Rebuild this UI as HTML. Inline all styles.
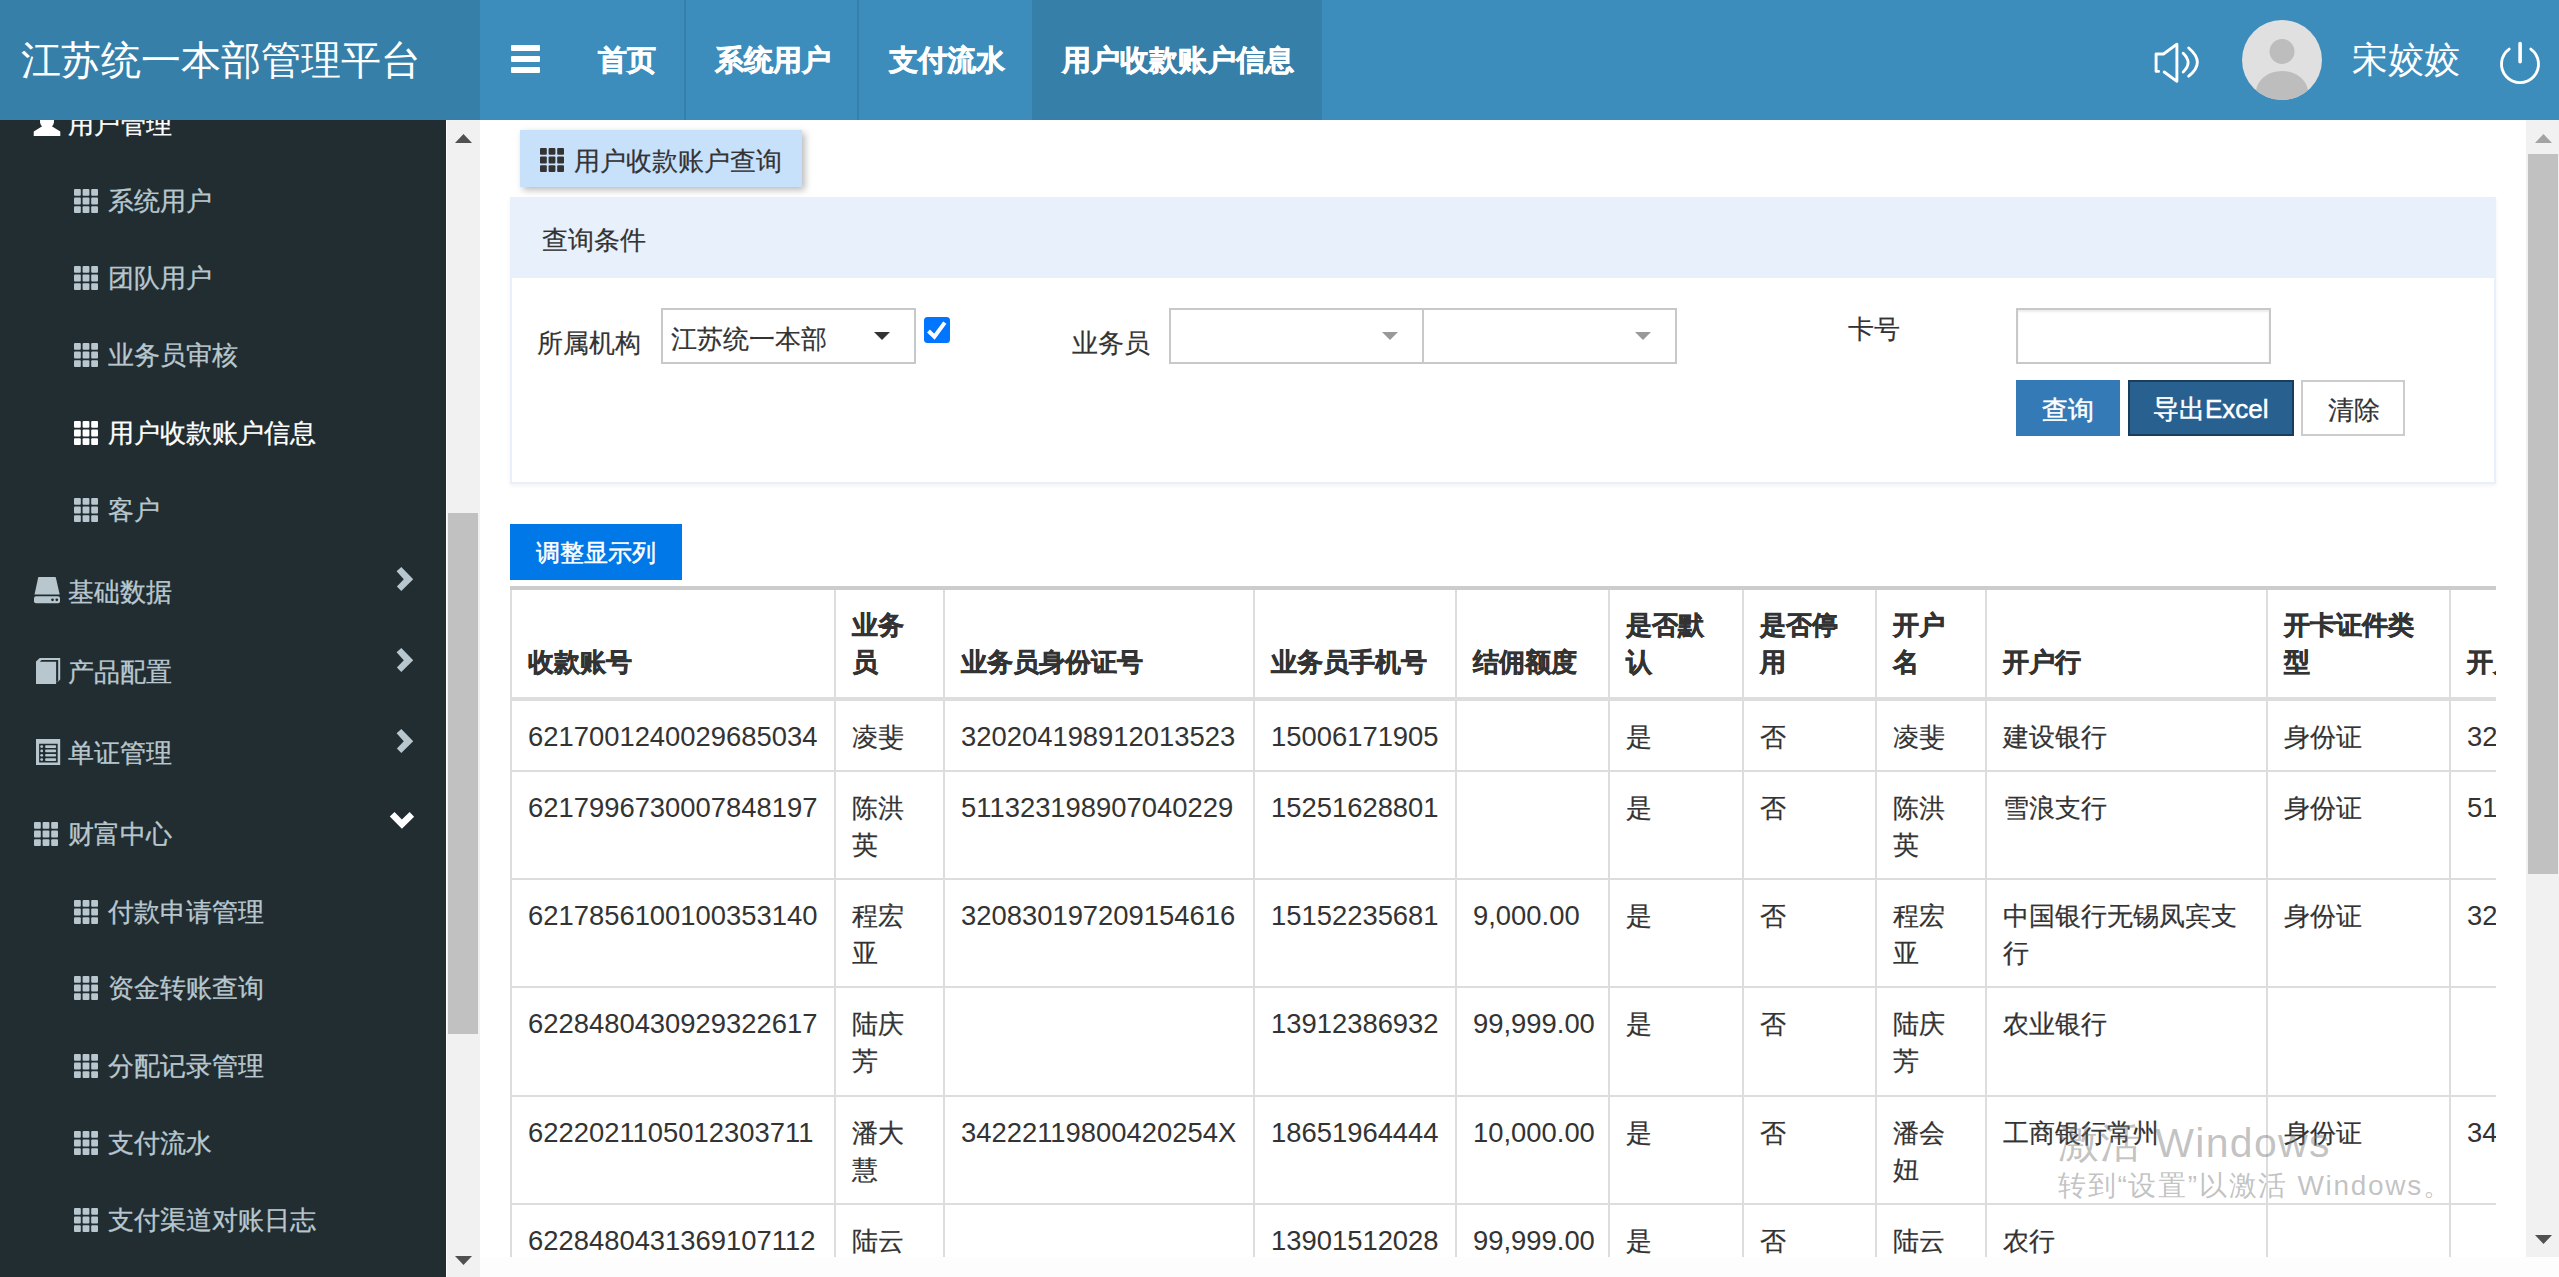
<!DOCTYPE html>
<html><head><meta charset="utf-8">
<style>
*{box-sizing:border-box}
html,body{margin:0;padding:0}
body{width:2559px;height:1277px;overflow:hidden;position:relative;background:#fcfdfc;font-family:"Liberation Sans",sans-serif;color:#333}
.abs{position:absolute;white-space:nowrap}
#hdr{position:absolute;left:0;top:0;width:2559px;height:120px;background:#3c8dbc}
#logo{position:absolute;left:0;top:0;width:480px;height:120px;background:#367fa9}
.nav{position:absolute;top:0;height:120px;color:#fff;font-weight:bold;font-size:28.5px;line-height:28.5px;-webkit-text-stroke:0.6px #fff}
.sep{position:absolute;top:0;width:2px;height:120px;background:#367fa9}
#side{position:absolute;left:0;top:120px;width:446px;height:1157px;background:#222d32;overflow:hidden}
.si{position:absolute;font-size:26px;line-height:26px;color:#b8c7ce;white-space:nowrap;-webkit-text-stroke:0.3px currentColor}
.grid{position:absolute;width:24px;height:24px}
#sbar{position:absolute;left:446px;top:120px;width:34px;height:1157px;background:#f1f1f1;border-left:1px solid #fff}
#content{position:absolute;left:480px;top:120px;width:2046px;height:1137px;background:#fff;overflow:hidden}
#rbar{position:absolute;left:2526px;top:120px;width:33px;height:1137px;background:#f1f1f1}
.t26{font-size:26px;line-height:26px;-webkit-text-stroke:0.2px currentColor}

#tb{border-collapse:collapse;table-layout:fixed;width:2263px;font-size:26px;line-height:37.14px;color:#333}
#tb th,#tb td{-webkit-text-stroke:0.2px #333;border:2px solid #ddd;padding:16px;text-align:left;vertical-align:bottom;word-break:break-all}
#tb td{vertical-align:top;padding:18px 16px 10px}
#tb thead th{border-bottom:4px solid #ddd;font-weight:bold;-webkit-text-stroke:0.5px #333}
#tb thead tr th{border-top:4px solid #ccc}
#tb .n{font-size:27.4px;position:relative;top:-1px;white-space:nowrap;-webkit-text-stroke:0}
#tb tr.r0{height:111px}#tb tr.r1{height:72px}#tb tr.r2{height:108px}#tb tr.r3,#tb tr.r5,#tb tr.r6{height:108px}#tb tr.r4{height:109px}
</style></head><body>


<div id="side">
</div>
<div id="sbar"></div>
<div id="content"></div>
<div id="rbar"></div>
<svg class="abs" style="left:74px;top:189px" width="24" height="24" viewBox="0 0 24 24" fill="#b8c7ce"><rect x="0.0" y="0.0" width="6.8" height="6.8" rx="1"/><rect x="0.0" y="8.6" width="6.8" height="6.8" rx="1"/><rect x="0.0" y="17.2" width="6.8" height="6.8" rx="1"/><rect x="8.6" y="0.0" width="6.8" height="6.8" rx="1"/><rect x="8.6" y="8.6" width="6.8" height="6.8" rx="1"/><rect x="8.6" y="17.2" width="6.8" height="6.8" rx="1"/><rect x="17.2" y="0.0" width="6.8" height="6.8" rx="1"/><rect x="17.2" y="8.6" width="6.8" height="6.8" rx="1"/><rect x="17.2" y="17.2" width="6.8" height="6.8" rx="1"/></svg>
<div class="si" style="left:108px;top:188px;color:#b8c7ce">系统用户</div>
<svg class="abs" style="left:74px;top:266px" width="24" height="24" viewBox="0 0 24 24" fill="#b8c7ce"><rect x="0.0" y="0.0" width="6.8" height="6.8" rx="1"/><rect x="0.0" y="8.6" width="6.8" height="6.8" rx="1"/><rect x="0.0" y="17.2" width="6.8" height="6.8" rx="1"/><rect x="8.6" y="0.0" width="6.8" height="6.8" rx="1"/><rect x="8.6" y="8.6" width="6.8" height="6.8" rx="1"/><rect x="8.6" y="17.2" width="6.8" height="6.8" rx="1"/><rect x="17.2" y="0.0" width="6.8" height="6.8" rx="1"/><rect x="17.2" y="8.6" width="6.8" height="6.8" rx="1"/><rect x="17.2" y="17.2" width="6.8" height="6.8" rx="1"/></svg>
<div class="si" style="left:108px;top:265px;color:#b8c7ce">团队用户</div>
<svg class="abs" style="left:74px;top:343px" width="24" height="24" viewBox="0 0 24 24" fill="#b8c7ce"><rect x="0.0" y="0.0" width="6.8" height="6.8" rx="1"/><rect x="0.0" y="8.6" width="6.8" height="6.8" rx="1"/><rect x="0.0" y="17.2" width="6.8" height="6.8" rx="1"/><rect x="8.6" y="0.0" width="6.8" height="6.8" rx="1"/><rect x="8.6" y="8.6" width="6.8" height="6.8" rx="1"/><rect x="8.6" y="17.2" width="6.8" height="6.8" rx="1"/><rect x="17.2" y="0.0" width="6.8" height="6.8" rx="1"/><rect x="17.2" y="8.6" width="6.8" height="6.8" rx="1"/><rect x="17.2" y="17.2" width="6.8" height="6.8" rx="1"/></svg>
<div class="si" style="left:108px;top:342px;color:#b8c7ce">业务员审核</div>
<svg class="abs" style="left:74px;top:421px" width="24" height="24" viewBox="0 0 24 24" fill="#fff"><rect x="0.0" y="0.0" width="6.8" height="6.8" rx="1"/><rect x="0.0" y="8.6" width="6.8" height="6.8" rx="1"/><rect x="0.0" y="17.2" width="6.8" height="6.8" rx="1"/><rect x="8.6" y="0.0" width="6.8" height="6.8" rx="1"/><rect x="8.6" y="8.6" width="6.8" height="6.8" rx="1"/><rect x="8.6" y="17.2" width="6.8" height="6.8" rx="1"/><rect x="17.2" y="0.0" width="6.8" height="6.8" rx="1"/><rect x="17.2" y="8.6" width="6.8" height="6.8" rx="1"/><rect x="17.2" y="17.2" width="6.8" height="6.8" rx="1"/></svg>
<div class="si" style="left:108px;top:420px;color:#fff">用户收款账户信息</div>
<svg class="abs" style="left:74px;top:498px" width="24" height="24" viewBox="0 0 24 24" fill="#b8c7ce"><rect x="0.0" y="0.0" width="6.8" height="6.8" rx="1"/><rect x="0.0" y="8.6" width="6.8" height="6.8" rx="1"/><rect x="0.0" y="17.2" width="6.8" height="6.8" rx="1"/><rect x="8.6" y="0.0" width="6.8" height="6.8" rx="1"/><rect x="8.6" y="8.6" width="6.8" height="6.8" rx="1"/><rect x="8.6" y="17.2" width="6.8" height="6.8" rx="1"/><rect x="17.2" y="0.0" width="6.8" height="6.8" rx="1"/><rect x="17.2" y="8.6" width="6.8" height="6.8" rx="1"/><rect x="17.2" y="17.2" width="6.8" height="6.8" rx="1"/></svg>
<div class="si" style="left:108px;top:497px;color:#b8c7ce">客户</div>
<svg class="abs" style="left:74px;top:900px" width="24" height="24" viewBox="0 0 24 24" fill="#b8c7ce"><rect x="0.0" y="0.0" width="6.8" height="6.8" rx="1"/><rect x="0.0" y="8.6" width="6.8" height="6.8" rx="1"/><rect x="0.0" y="17.2" width="6.8" height="6.8" rx="1"/><rect x="8.6" y="0.0" width="6.8" height="6.8" rx="1"/><rect x="8.6" y="8.6" width="6.8" height="6.8" rx="1"/><rect x="8.6" y="17.2" width="6.8" height="6.8" rx="1"/><rect x="17.2" y="0.0" width="6.8" height="6.8" rx="1"/><rect x="17.2" y="8.6" width="6.8" height="6.8" rx="1"/><rect x="17.2" y="17.2" width="6.8" height="6.8" rx="1"/></svg>
<div class="si" style="left:108px;top:899px">付款申请管理</div>
<svg class="abs" style="left:74px;top:976px" width="24" height="24" viewBox="0 0 24 24" fill="#b8c7ce"><rect x="0.0" y="0.0" width="6.8" height="6.8" rx="1"/><rect x="0.0" y="8.6" width="6.8" height="6.8" rx="1"/><rect x="0.0" y="17.2" width="6.8" height="6.8" rx="1"/><rect x="8.6" y="0.0" width="6.8" height="6.8" rx="1"/><rect x="8.6" y="8.6" width="6.8" height="6.8" rx="1"/><rect x="8.6" y="17.2" width="6.8" height="6.8" rx="1"/><rect x="17.2" y="0.0" width="6.8" height="6.8" rx="1"/><rect x="17.2" y="8.6" width="6.8" height="6.8" rx="1"/><rect x="17.2" y="17.2" width="6.8" height="6.8" rx="1"/></svg>
<div class="si" style="left:108px;top:975px">资金转账查询</div>
<svg class="abs" style="left:74px;top:1054px" width="24" height="24" viewBox="0 0 24 24" fill="#b8c7ce"><rect x="0.0" y="0.0" width="6.8" height="6.8" rx="1"/><rect x="0.0" y="8.6" width="6.8" height="6.8" rx="1"/><rect x="0.0" y="17.2" width="6.8" height="6.8" rx="1"/><rect x="8.6" y="0.0" width="6.8" height="6.8" rx="1"/><rect x="8.6" y="8.6" width="6.8" height="6.8" rx="1"/><rect x="8.6" y="17.2" width="6.8" height="6.8" rx="1"/><rect x="17.2" y="0.0" width="6.8" height="6.8" rx="1"/><rect x="17.2" y="8.6" width="6.8" height="6.8" rx="1"/><rect x="17.2" y="17.2" width="6.8" height="6.8" rx="1"/></svg>
<div class="si" style="left:108px;top:1053px">分配记录管理</div>
<svg class="abs" style="left:74px;top:1131px" width="24" height="24" viewBox="0 0 24 24" fill="#b8c7ce"><rect x="0.0" y="0.0" width="6.8" height="6.8" rx="1"/><rect x="0.0" y="8.6" width="6.8" height="6.8" rx="1"/><rect x="0.0" y="17.2" width="6.8" height="6.8" rx="1"/><rect x="8.6" y="0.0" width="6.8" height="6.8" rx="1"/><rect x="8.6" y="8.6" width="6.8" height="6.8" rx="1"/><rect x="8.6" y="17.2" width="6.8" height="6.8" rx="1"/><rect x="17.2" y="0.0" width="6.8" height="6.8" rx="1"/><rect x="17.2" y="8.6" width="6.8" height="6.8" rx="1"/><rect x="17.2" y="17.2" width="6.8" height="6.8" rx="1"/></svg>
<div class="si" style="left:108px;top:1130px">支付流水</div>
<svg class="abs" style="left:74px;top:1208px" width="24" height="24" viewBox="0 0 24 24" fill="#b8c7ce"><rect x="0.0" y="0.0" width="6.8" height="6.8" rx="1"/><rect x="0.0" y="8.6" width="6.8" height="6.8" rx="1"/><rect x="0.0" y="17.2" width="6.8" height="6.8" rx="1"/><rect x="8.6" y="0.0" width="6.8" height="6.8" rx="1"/><rect x="8.6" y="8.6" width="6.8" height="6.8" rx="1"/><rect x="8.6" y="17.2" width="6.8" height="6.8" rx="1"/><rect x="17.2" y="0.0" width="6.8" height="6.8" rx="1"/><rect x="17.2" y="8.6" width="6.8" height="6.8" rx="1"/><rect x="17.2" y="17.2" width="6.8" height="6.8" rx="1"/></svg>
<div class="si" style="left:108px;top:1207px">支付渠道对账日志</div>
<svg class="abs" style="left:33px;top:115px" width="28" height="22" viewBox="0 0 28 22"><path d="M7 0 H21 V6 Q21 10 18.8 11.3 L27.3 16.5 V21 H0.75 V16.5 L9.2 11.3 Q7 10 7 6 Z" fill="#fff"/></svg>
<div class="si" style="left:68px;top:111px;color:#fff">用户管理</div>
<svg class="abs" style="left:34px;top:577px" width="26" height="27" viewBox="0 0 26 27"><path d="M4.8 0 H21 Q21.6 0 21.8 0.6 L25.7 17.6 H0.5 L4.2 0.6 Q4.4 0 4.8 0Z" fill="#b8c7ce"/><rect x="0" y="19.3" width="26" height="7" rx="2" fill="#b8c7ce"/><circle cx="18.5" cy="22.8" r="1.4" fill="#222d32"/><circle cx="22.8" cy="22.8" r="1.4" fill="#222d32"/></svg>
<div class="si" style="left:68px;top:579px">基础数据</div>
<svg class="abs" style="left:35.8px;top:658px" width="25" height="26" viewBox="0 0 25 26"><path d="M0 3.4 L3.8 0 H24.2 V21.6 L22.2 23.5 H20.1 V26 H0 Z" fill="#b8c7ce"/><path d="M3.8 3.7 L5.6 1.9 H22.2 V23.6 H20.1 V3.7 Z" fill="#222d32"/></svg>
<div class="si" style="left:68px;top:659px">产品配置</div>
<svg class="abs" style="left:35.8px;top:739px" width="25" height="26" viewBox="0 0 25 26"><path fill-rule="evenodd" d="M0 0 H24.2 V26 H0 Z M3.1 4.7 V23.5 H21.7 V4.7 Z" fill="#b8c7ce"/><circle cx="5.7" cy="7.6" r="1.4" fill="#b8c7ce"/><rect x="9.1" y="6.3" width="11" height="2.6" rx="1" fill="#b8c7ce"/><circle cx="5.7" cy="11.9" r="1.4" fill="#b8c7ce"/><rect x="9.1" y="10.6" width="11" height="2.6" rx="1" fill="#b8c7ce"/><circle cx="5.7" cy="16.3" r="1.4" fill="#b8c7ce"/><rect x="9.1" y="15.0" width="11" height="2.6" rx="1" fill="#b8c7ce"/><circle cx="5.7" cy="20.6" r="1.4" fill="#b8c7ce"/><rect x="9.1" y="19.3" width="11" height="2.6" rx="1" fill="#b8c7ce"/></svg>
<div class="si" style="left:68px;top:740px">单证管理</div>
<svg class="abs" style="left:34px;top:822px" width="24" height="24" viewBox="0 0 24 24" fill="#b8c7ce"><rect x="0.0" y="0.0" width="6.8" height="6.8" rx="1"/><rect x="0.0" y="8.6" width="6.8" height="6.8" rx="1"/><rect x="0.0" y="17.2" width="6.8" height="6.8" rx="1"/><rect x="8.6" y="0.0" width="6.8" height="6.8" rx="1"/><rect x="8.6" y="8.6" width="6.8" height="6.8" rx="1"/><rect x="8.6" y="17.2" width="6.8" height="6.8" rx="1"/><rect x="17.2" y="0.0" width="6.8" height="6.8" rx="1"/><rect x="17.2" y="8.6" width="6.8" height="6.8" rx="1"/><rect x="17.2" y="17.2" width="6.8" height="6.8" rx="1"/></svg>
<div class="si" style="left:68px;top:821px">财富中心</div>
<svg class="abs" style="left:396px;top:566px" width="18" height="26" viewBox="0 0 18 26"><path d="M5.3 0.9 L17.2 13.3 L5.3 25 L0.9 20.6 L7.8 13.3 L0.6 5.3 Z" fill="#b8c7ce"/></svg>
<svg class="abs" style="left:396px;top:647px" width="18" height="26" viewBox="0 0 18 26"><path d="M5.3 0.9 L17.2 13.3 L5.3 25 L0.9 20.6 L7.8 13.3 L0.6 5.3 Z" fill="#b8c7ce"/></svg>
<svg class="abs" style="left:396px;top:728px" width="18" height="26" viewBox="0 0 18 26"><path d="M5.3 0.9 L17.2 13.3 L5.3 25 L0.9 20.6 L7.8 13.3 L0.6 5.3 Z" fill="#b8c7ce"/></svg>
<svg class="abs" style="left:389px;top:811px" width="26" height="19" viewBox="0 0 26 19"><path d="M0.8 5.6 L5.5 1.1 L12.9 8.6 L20.6 1.1 L25.1 5.8 L12.9 17.7 Z" fill="#fff"/></svg>
<div class="abs" style="left:448px;top:513px;width:30px;height:521px;background:#c1c1c1"></div>
<svg class="abs" style="left:455px;top:134px" width="17" height="9" viewBox="0 0 17 9"><path d="M0 9 L8.5 0 L17 9Z" fill="#505050"/></svg>
<svg class="abs" style="left:455px;top:1256px" width="17" height="9" viewBox="0 0 17 9"><path d="M0 0 L8.5 9 L17 0Z" fill="#505050"/></svg>
<div class="abs" style="left:2528px;top:154px;width:30px;height:720px;background:#c1c1c1"></div>
<svg class="abs" style="left:2535px;top:134px" width="17" height="9" viewBox="0 0 17 9"><path d="M0 9 L8.5 0 L17 9Z" fill="#a3a3a3"/></svg>
<svg class="abs" style="left:2535px;top:1235px" width="17" height="9" viewBox="0 0 17 9"><path d="M0 0 L8.5 9 L17 0Z" fill="#505050"/></svg>
<div class="abs" style="left:520px;top:130px;width:282px;height:57px;background:#c8e1fb;box-shadow:3px 3px 7px rgba(0,0,0,0.28)"></div>
<svg class="abs" style="left:540px;top:148px" width="24" height="24" viewBox="0 0 24 24" fill="#333"><rect x="0.0" y="0.0" width="6.8" height="6.8" rx="1"/><rect x="0.0" y="8.6" width="6.8" height="6.8" rx="1"/><rect x="0.0" y="17.2" width="6.8" height="6.8" rx="1"/><rect x="8.6" y="0.0" width="6.8" height="6.8" rx="1"/><rect x="8.6" y="8.6" width="6.8" height="6.8" rx="1"/><rect x="8.6" y="17.2" width="6.8" height="6.8" rx="1"/><rect x="17.2" y="0.0" width="6.8" height="6.8" rx="1"/><rect x="17.2" y="8.6" width="6.8" height="6.8" rx="1"/><rect x="17.2" y="17.2" width="6.8" height="6.8" rx="1"/></svg>
<div class="abs t26" style="left:574px;top:148px;color:#333">用户收款账户查询</div>
<div class="abs" style="left:510px;top:197px;width:1986px;height:287px;border:2px solid #e8f1fb;background:#fff;box-shadow:0 2px 4px rgba(0,0,0,0.05)"></div>
<div class="abs" style="left:510px;top:197px;width:1986px;height:81px;background:#e8f1fb"></div>
<div class="abs t26" style="left:542px;top:227px;color:#333">查询条件</div>
<div class="abs t26" style="left:537px;top:330px;color:#333">所属机构</div>
<div class="abs" style="left:661px;top:308px;width:255px;height:56px;border:2px solid #c8c8c8;background:#fff"></div>
<div class="abs t26" style="left:671px;top:326px;color:#333">江苏统一本部</div>
<svg class="abs" style="left:874px;top:332px" width="16" height="8" viewBox="0 0 16 8"><path d="M0 0H16L8 8Z" fill="#333"/></svg>
<svg class="abs" style="left:924px;top:317px" width="26" height="26" viewBox="0 0 26 26"><rect x="0" y="0" width="26" height="26" rx="3.5" fill="#0075ff"/><path d="M4.5 14 L10.4 19.8 L20.8 5.6" fill="none" stroke="#fff" stroke-width="4"/></svg>
<div class="abs t26" style="left:1072px;top:330px;color:#333">业务员</div>
<div class="abs" style="left:1169px;top:308px;width:508px;height:56px;border:2px solid #c8c8c8;background:#fff"></div>
<div class="abs" style="left:1422px;top:308px;width:2px;height:56px;background:#c8c8c8"></div>
<svg class="abs" style="left:1382px;top:332px" width="16" height="8" viewBox="0 0 16 8"><path d="M0 0H16L8 8Z" fill="#999"/></svg>
<svg class="abs" style="left:1635px;top:332px" width="16" height="8" viewBox="0 0 16 8"><path d="M0 0H16L8 8Z" fill="#999"/></svg>
<div class="abs t26" style="left:1848px;top:316px;color:#333">卡号</div>
<div class="abs" style="left:2016px;top:308px;width:255px;height:56px;border:2px solid #c8c8c8;background:#fff;box-shadow:inset 0 2px 2px rgba(0,0,0,.075)"></div>
<div class="abs" style="left:2016px;top:380px;width:104px;height:56px;background:#337ab7"></div>
<div class="abs t26" style="left:2042px;top:397px;color:#fff;-webkit-text-stroke:0.5px #fff">查询</div>
<div class="abs" style="left:2128px;top:380px;width:166px;height:56px;background:#286090;border:2px solid #1a3d5c"></div>
<div class="abs t26" style="left:2153px;top:396px;color:#fff;-webkit-text-stroke:0.5px #fff">导出Excel</div>
<div class="abs" style="left:2301px;top:380px;width:104px;height:56px;background:#fff;border:2px solid #ccc"></div>
<div class="abs t26" style="left:2328px;top:397px;color:#333">清除</div>
<div class="abs" style="left:510px;top:524px;width:172px;height:56px;background:#0078e7"></div>
<div class="abs" style="left:536px;top:541px;color:#fff;font-size:24px;line-height:24px;-webkit-text-stroke:0.5px #fff">调整显示列</div>
<div id="tw" style="position:absolute;left:510px;top:586px;width:1986px;height:671px;overflow:hidden">
<table id="tb"><colgroup><col style="width:324px"><col style="width:109px"><col style="width:310px"><col style="width:202px"><col style="width:153px"><col style="width:134px"><col style="width:133px"><col style="width:110px"><col style="width:281px"><col style="width:183px"><col style="width:330px"></colgroup>
<thead><tr class="r0"><th>收款账号</th><th>业务员</th><th>业务员身份证号</th><th>业务员手机号</th><th>结佣额度</th><th>是否默认</th><th>是否停用</th><th>开户名</th><th>开户行</th><th>开卡证件类型</th><th>开户人证件号码</th></tr></thead><tbody>
<tr class="r1"><td><span class="n">6217001240029685034</span></td><td>凌斐</td><td><span class="n">320204198912013523</span></td><td><span class="n">15006171905</span></td><td></td><td>是</td><td>否</td><td>凌斐</td><td>建设银行</td><td>身份证</td><td><span class="n">320204198912013523</span></td></tr>
<tr class="r2"><td><span class="n">6217996730007848197</span></td><td>陈洪英</td><td><span class="n">511323198907040229</span></td><td><span class="n">15251628801</span></td><td></td><td>是</td><td>否</td><td>陈洪英</td><td>雪浪支行</td><td>身份证</td><td><span class="n">511323198907040229</span></td></tr>
<tr class="r3"><td><span class="n">6217856100100353140</span></td><td>程宏亚</td><td><span class="n">320830197209154616</span></td><td><span class="n">15152235681</span></td><td><span class="n">9,000.00</span></td><td>是</td><td>否</td><td>程宏亚</td><td>中国银行无锡凤宾支行</td><td>身份证</td><td><span class="n">320830197209154616</span></td></tr>
<tr class="r4"><td><span class="n">6228480430929322617</span></td><td>陆庆芳</td><td></td><td><span class="n">13912386932</span></td><td><span class="n">99,999.00</span></td><td>是</td><td>否</td><td>陆庆芳</td><td>农业银行</td><td></td><td></td></tr>
<tr class="r5"><td><span class="n">6222021105012303711</span></td><td>潘大慧</td><td><span class="n">34222119800420254X</span></td><td><span class="n">18651964444</span></td><td><span class="n">10,000.00</span></td><td>是</td><td>否</td><td>潘会妞</td><td>工商银行常州</td><td>身份证</td><td><span class="n">34222119800420254X</span></td></tr>
<tr class="r6"><td><span class="n">6228480431369107112</span></td><td>陆云云</td><td></td><td><span class="n">13901512028</span></td><td><span class="n">99,999.00</span></td><td>是</td><td>否</td><td>陆云云</td><td>农行</td><td></td><td></td></tr>
</tbody></table></div>
<div class="abs" style="left:2058px;top:1118px;font-size:41px;line-height:50px;letter-spacing:1.3px;color:rgba(120,120,120,0.45)">激活 Windows</div>
<div class="abs" style="left:2058px;top:1169px;font-size:28px;line-height:34px;letter-spacing:1.7px;color:rgba(120,120,120,0.45)">转到“设置”以激活 Windows。</div>


<div id="hdr">
  <div id="logo"></div>
  <div class="abs" style="left:21px;top:40px;font-size:40.1px;line-height:40.1px;color:#fff">江苏统一本部管理平台</div>
  <!-- hamburger -->
  <div class="abs" style="left:511px;top:45px;width:29px;height:6px;background:#fff;border-radius:1px"></div>
  <div class="abs" style="left:511px;top:56px;width:29px;height:6px;background:#fff;border-radius:1px"></div>
  <div class="abs" style="left:511px;top:67px;width:29px;height:6px;background:#fff;border-radius:1px"></div>
  <div class="abs nav" style="left:598px;top:46px">首页</div>
  <div class="sep" style="left:684px"></div>
  <div class="abs nav" style="left:715px;top:46px">系统用户</div>
  <div class="sep" style="left:857px"></div>
  <div class="abs" style="left:1032px;top:0;width:290px;height:120px;background:#367fa9"></div>
  <div class="abs nav" style="left:889px;top:46px">支付流水</div>
  <div class="abs nav" style="left:1062px;top:46px">用户收款账户信息</div>
  <!-- speaker -->
  <svg class="abs" style="left:2145px;top:35px" width="65" height="55" viewBox="0 0 65 55">
    <path d="M13.6 36.4 H11.1 V19 H18.5 L31.9 9.2 V46.3 L19.2 37" fill="none" stroke="#fff" stroke-width="2.9" stroke-linecap="round" stroke-linejoin="round"/>
    <path d="M38.2 18.2 Q48 27.6 38.2 37" fill="none" stroke="#fff" stroke-width="2.9" stroke-linecap="round"/>
    <path d="M43.7 13 Q61 27.6 43.7 41.2" fill="none" stroke="#fff" stroke-width="2.9" stroke-linecap="round"/>
  </svg>
  <!-- avatar -->
  <svg class="abs" style="left:2242px;top:20px" width="80" height="80" viewBox="0 0 80 80">
    <defs><clipPath id="cc"><circle cx="40" cy="40" r="40"/></clipPath></defs>
    <circle cx="40" cy="40" r="40" fill="#e0e0e0"/>
    <g clip-path="url(#cc)">
      <circle cx="40" cy="31.5" r="12.5" fill="#bdbdbd"/>
      <ellipse cx="40" cy="72" rx="26" ry="21" fill="#bdbdbd"/>
    </g>
  </svg>
  <div class="abs" style="left:2352px;top:42px;font-size:36px;line-height:36px;color:#fff">宋姣姣</div>
  <!-- power -->
  <svg class="abs" style="left:2490px;top:35px" width="60" height="55" viewBox="0 0 60 55">
    <path d="M19.2 14.1 A18.5 18.5 0 1 0 40.8 14.1" fill="none" stroke="#fff" stroke-width="2.9" stroke-linecap="round"/>
    <line x1="30.1" y1="8.5" x2="30.1" y2="26.8" stroke="#fff" stroke-width="3.6" stroke-linecap="round"/>
  </svg>
</div>
</body></html>
